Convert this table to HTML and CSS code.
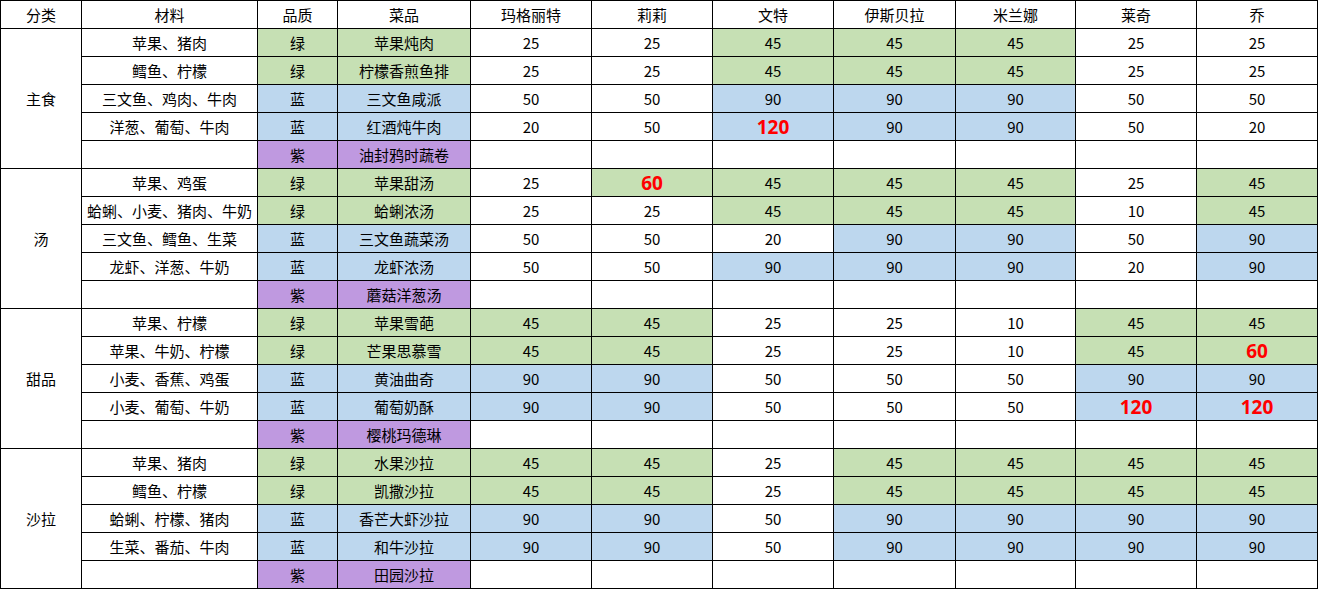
FILE: index.html
```html
<!DOCTYPE html>
<html lang="zh-CN">
<head>
<meta charset="utf-8">
<title>料理表</title>
<link rel="stylesheet" href="styles.css">
</head>
<body>
<table class="sheet">
  <colgroup>
    <col class="c-cat"><col class="c-mat"><col class="c-q"><col class="c-dish">
    <col class="c-n"><col class="c-n"><col class="c-n"><col class="c-n2"><col class="c-n3"><col class="c-n"><col class="c-n">
  </colgroup>
  <thead>
    <tr><th>分类</th><th>材料</th><th>品质</th><th>菜品</th><th>玛格丽特</th><th>莉莉</th><th>文特</th><th>伊斯贝拉</th><th>米兰娜</th><th>莱奇</th><th>乔</th></tr>
  </thead>
  <tbody>
    <tr><td rowspan="5">主食</td><td>苹果、猪肉</td><td class="g">绿</td><td class="g">苹果炖肉</td><td>25</td><td>25</td><td class="g">45</td><td class="g">45</td><td class="g">45</td><td>25</td><td>25</td></tr>
    <tr><td>鳕鱼、柠檬</td><td class="g">绿</td><td class="g">柠檬香煎鱼排</td><td>25</td><td>25</td><td class="g">45</td><td class="g">45</td><td class="g">45</td><td>25</td><td>25</td></tr>
    <tr><td>三文鱼、鸡肉、牛肉</td><td class="b">蓝</td><td class="b">三文鱼咸派</td><td>50</td><td>50</td><td class="b">90</td><td class="b">90</td><td class="b">90</td><td>50</td><td>50</td></tr>
    <tr><td>洋葱、葡萄、牛肉</td><td class="b">蓝</td><td class="b">红酒炖牛肉</td><td>20</td><td>50</td><td class="b hot">120</td><td class="b">90</td><td class="b">90</td><td>50</td><td>20</td></tr>
    <tr><td></td><td class="p">紫</td><td class="p">油封鸦时蔬卷</td><td></td><td></td><td></td><td></td><td></td><td></td><td></td></tr>

    <tr><td rowspan="5">汤</td><td>苹果、鸡蛋</td><td class="g">绿</td><td class="g">苹果甜汤</td><td>25</td><td class="g hot">60</td><td class="g">45</td><td class="g">45</td><td class="g">45</td><td>25</td><td class="g">45</td></tr>
    <tr><td>蛤蜊、小麦、猪肉、牛奶</td><td class="g">绿</td><td class="g">蛤蜊浓汤</td><td>25</td><td>25</td><td class="g">45</td><td class="g">45</td><td class="g">45</td><td>10</td><td class="g">45</td></tr>
    <tr><td>三文鱼、鳕鱼、生菜</td><td class="b">蓝</td><td class="b">三文鱼蔬菜汤</td><td>50</td><td>50</td><td>20</td><td class="b">90</td><td class="b">90</td><td>50</td><td class="b">90</td></tr>
    <tr><td>龙虾、洋葱、牛奶</td><td class="b">蓝</td><td class="b">龙虾浓汤</td><td>50</td><td>50</td><td class="b">90</td><td class="b">90</td><td class="b">90</td><td>20</td><td class="b">90</td></tr>
    <tr><td></td><td class="p">紫</td><td class="p">蘑菇洋葱汤</td><td></td><td></td><td></td><td></td><td></td><td></td><td></td></tr>

    <tr><td rowspan="5">甜品</td><td>苹果、柠檬</td><td class="g">绿</td><td class="g">苹果雪葩</td><td class="g">45</td><td class="g">45</td><td>25</td><td>25</td><td>10</td><td class="g">45</td><td class="g">45</td></tr>
    <tr><td>苹果、牛奶、柠檬</td><td class="g">绿</td><td class="g">芒果思慕雪</td><td class="g">45</td><td class="g">45</td><td>25</td><td>25</td><td>10</td><td class="g">45</td><td class="g hot">60</td></tr>
    <tr><td>小麦、香蕉、鸡蛋</td><td class="b">蓝</td><td class="b">黄油曲奇</td><td class="b">90</td><td class="b">90</td><td>50</td><td>50</td><td>50</td><td class="b">90</td><td class="b">90</td></tr>
    <tr><td>小麦、葡萄、牛奶</td><td class="b">蓝</td><td class="b">葡萄奶酥</td><td class="b">90</td><td class="b">90</td><td>50</td><td>50</td><td>50</td><td class="b hot">120</td><td class="b hot">120</td></tr>
    <tr><td></td><td class="p">紫</td><td class="p">樱桃玛德琳</td><td></td><td></td><td></td><td></td><td></td><td></td><td></td></tr>

    <tr><td rowspan="5">沙拉</td><td>苹果、猪肉</td><td class="g">绿</td><td class="g">水果沙拉</td><td class="g">45</td><td class="g">45</td><td>25</td><td class="g">45</td><td class="g">45</td><td class="g">45</td><td class="g">45</td></tr>
    <tr><td>鳕鱼、柠檬</td><td class="g">绿</td><td class="g">凯撒沙拉</td><td class="g">45</td><td class="g">45</td><td>25</td><td class="g">45</td><td class="g">45</td><td class="g">45</td><td class="g">45</td></tr>
    <tr><td>蛤蜊、柠檬、猪肉</td><td class="b">蓝</td><td class="b">香芒大虾沙拉</td><td class="b">90</td><td class="b">90</td><td>50</td><td class="b">90</td><td class="b">90</td><td class="b">90</td><td class="b">90</td></tr>
    <tr><td>生菜、番茄、牛肉</td><td class="b">蓝</td><td class="b">和牛沙拉</td><td class="b">90</td><td class="b">90</td><td>50</td><td class="b">90</td><td class="b">90</td><td class="b">90</td><td class="b">90</td></tr>
    <tr><td></td><td class="p">紫</td><td class="p">田园沙拉</td><td></td><td></td><td></td><td></td><td></td><td></td><td></td></tr>
  </tbody>
</table>
</body>
</html>
```

FILE: styles.css
```css
html, body {
  margin: 0;
  padding: 0;
  background: #ffffff;
}

.sheet {
  border-collapse: collapse;
  table-layout: fixed;
  width: 1318px;
  font-family: "Noto Sans CJK SC", "Noto Sans", "DejaVu Sans", sans-serif;
  font-size: 15px;
  color: #000;
}

.c-cat { width: 81px; }
.c-mat { width: 176px; }
.c-q { width: 80px; }
.c-dish { width: 133px; }
.c-n { width: 121px; }
.c-n2 { width: 122px; }
.c-n3 { width: 120px; }

.sheet th,
.sheet td {
  border: 1px solid #000;
  height: 27px;
  padding: 0;
  text-align: center;
  vertical-align: middle;
  font-weight: normal;
  line-height: 20px;
  white-space: nowrap;
  overflow: hidden;
}

.g { background: #c6e0b4; }
.b { background: #bdd7ee; }
.p { background: #bf99e0; }

.sheet td.hot {
  color: #ff0000;
  font-family: "Open Sans", "Noto Sans", "Liberation Sans", sans-serif;
  font-weight: bold;
  font-size: 19px;
  line-height: 20px;
}
```
